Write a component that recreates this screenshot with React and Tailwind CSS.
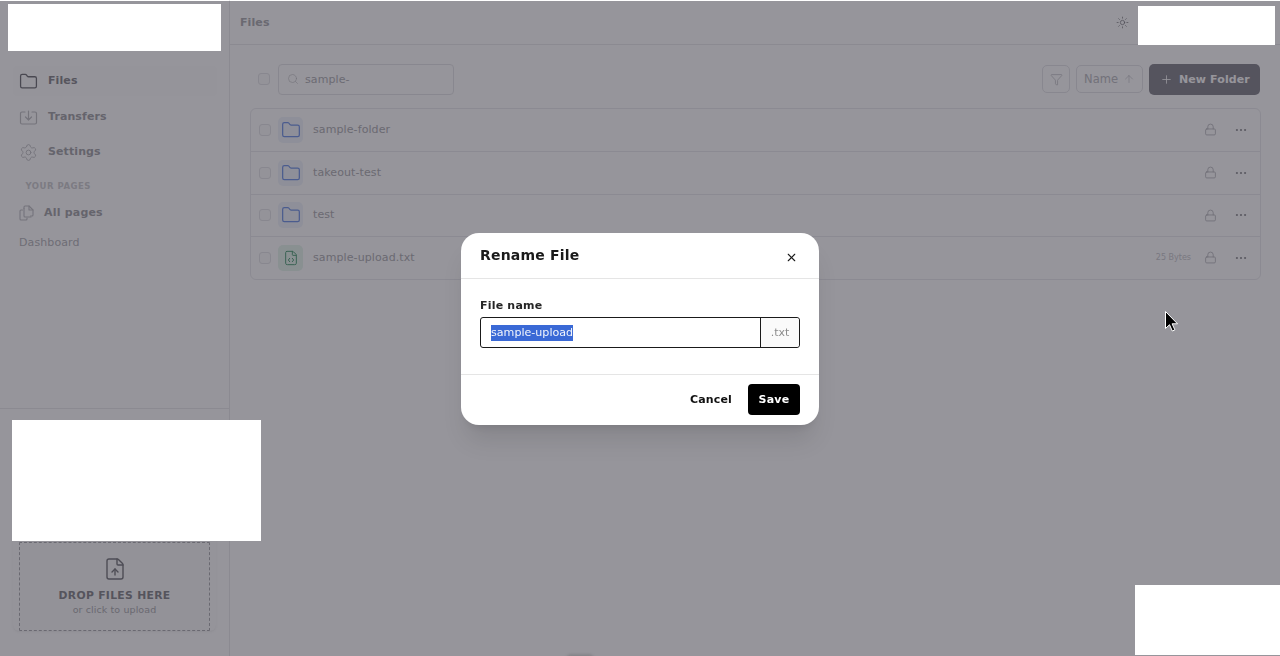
import React from "react";
import { Folder, Settings, Sun, Search, Funnel, ArrowUp, Plus, Lock, Ellipsis, FileCode, X, FileUp } from "lucide-react";

const rows = [
  { name: "sample-folder", type: "folder" },
  { name: "takeout-test", type: "folder" },
  { name: "test", type: "folder" },
  { name: "sample-upload.txt", type: "file", size: "25 Bytes" },
];

function Row({ r, i }) {
  return (
    <div className={`h-[42.5px] flex items-center pl-[8px] pr-[10px] ${i ? "border-t border-[#ececef]" : ""}`}>
      <span className="w-3 h-3 rounded-[3px] border border-[#e6e6e9] bg-[#fbfbfc] mr-[7px]" />
      <span className={`w-[25px] h-[26px] rounded-[5px] flex items-center justify-center ${r.type === "folder" ? "bg-[#f1f5fb]" : "bg-[#e8f6ee]"}`}>
        {r.type === "folder"
          ? <Folder size={20} strokeWidth={1.5} className="text-[#7a9ae8]" />
          : <FileCode size={16} strokeWidth={1.5} className="text-[#5aa47e]" />}
      </span>
      <span className="ml-[10px] text-[11px] text-[#b2b2b6] tracking-[0.1px]">{r.name}</span>
      <span className="flex-1" />
      {r.size && <span className="text-[8px] text-[#ccccd0] mr-[13px]">{r.size}</span>}
      <Lock size={13} strokeWidth={1.4} className="text-[#b4b4b8] mr-[17px]" />
      <Ellipsis size={14} strokeWidth={1.8} className="text-[#98989c] mr-[2px]" />
    </div>
  );
}

export default function App() {
  return (
    <div className="relative h-[656px] w-[1280px] overflow-hidden bg-white font-['DejaVu_Sans','Liberation_Sans',sans-serif]">
      <div className="flex h-full">
        {/* Sidebar */}
        <aside className="w-[230px] shrink-0 border-r border-[#ececee] flex flex-col bg-white">
          <div className="h-[66px]" />
          <nav className="px-[13px] flex flex-col">
            <div className="h-[30px] mr-[-1px] flex items-center gap-[10px] px-[6px] rounded bg-[#fdfdfd] text-[#8e8e92] text-[11px] font-bold tracking-[0.1px]">
              <Folder size={19} strokeWidth={1.6} className="text-[#77777c]" />
              Files
            </div>
            <div className="h-[29px] mt-[7px] flex items-center gap-[10px] px-[6px] text-[#a8a8ac] text-[11px] font-bold tracking-[0.1px]">
              <svg width="19" height="19" viewBox="0 0 19 19" fill="none" stroke="#c4c4c7" strokeWidth="1.2" strokeLinecap="round" strokeLinejoin="round">
                <path d="M6 4H3a1.5 1.5 0 0 0-1.5 1.5v9A1.5 1.5 0 0 0 3 16h13a1.5 1.5 0 0 0 1.5-1.5v-9A1.5 1.5 0 0 0 16 4h-3" />
                <path d="M9.5 3v8.5M6.5 9l3 3 3-3" />
              </svg>
              Transfers
            </div>
            <div className="h-[29px] mt-[6px] flex items-center gap-[10px] px-[6px] text-[#a8a8ac] text-[11px] font-bold tracking-[0.1px]">
              <Settings size={19} strokeWidth={1.2} className="text-[#c4c4c7]" />
              Settings
            </div>
            <div className="mt-[13px] ml-[12.5px] text-[8.5px] font-bold text-[#d0d0d3] tracking-[0.5px]">YOUR PAGES</div>
            <div className="h-[26px] mt-[7px] flex items-center gap-[10px] px-[6px] text-[#a8a8ac] text-[11px] font-bold tracking-[0.2px]">
              <svg width="15" height="16" viewBox="0 0 15 16" fill="none" stroke="#c4c4c7" strokeWidth="1.1" strokeLinecap="round" strokeLinejoin="round">
                <path d="M5 3.5V2a1 1 0 0 1 1-1h4l4 4v5a1 1 0 0 1-1 1h-1.5" />
                <path d="M10 1v4h4" />
                <path d="M3.5 5H2a1 1 0 0 0-1 1v8a1 1 0 0 0 1 1h5a1 1 0 0 0 1-1v-1" />
                <path d="M5 3.5v7.5a1 1 0 0 0 1 1h6" />
              </svg>
              All pages
            </div>
            <div className="mt-[9px] ml-[6px] text-[11px] tracking-[0.1px] text-[#b8b8bc]">Dashboard</div>
          </nav>
          <div className="flex-1" />
          <div className="h-[248px] border-t border-[#ececee] px-[13px] flex flex-col justify-end pb-[18px]">
            <div className="h-[95px] rounded-md bg-[#fdfdfd] p-[6px] mb-[7px] shadow-sm shadow-black/5 ">
              <div className="h-[89px] border border-dashed border-[#b0b0b4] bg-[#fafafa] flex flex-col items-center pt-[14px] rounded-[1px]">
                <FileUp size={24} strokeWidth={1.4} className="text-[#7e7e82]" />
                <div className="mt-[8px] text-[10.8px] font-bold text-[#8c8c90] tracking-[0.3px] leading-[14px]">DROP FILES HERE</div>
                <div className="text-[9.5px] text-[#b0b0b4] leading-[13px] tracking-[0.1px]">or click to upload</div>
              </div>
            </div>
          </div>
        </aside>

        {/* Main */}
        <main className="flex-1 flex flex-col">
          <header className="h-[45px] shrink-0 border-b border-[#ececee] flex items-center pl-[10px] pr-[151px]">
            <span className="text-[11px] font-bold text-[#b0b0b4] tracking-[0.1px] pt-[2px]">Files</span>
            <span className="flex-1" />
            <Sun size={13} strokeWidth={1.3} className="text-[#7e7e82]" />
          </header>
          <div className="pl-[20px] pr-[19px]">
            <div className="h-[30px] mt-[19px] mr-[1px] flex items-center">
              <span className="w-3 h-3 rounded-[3px] border border-[#e6e6e9] bg-[#fbfbfc] ml-[8px] mr-[8px]" />
              <div className="w-[176px] h-[31px] border border-[#e6e6e9] rounded flex items-center pl-[8px] gap-[6px]">
                <Search size={12} strokeWidth={1.3} className="text-[#c4c4c8]" />
                <span className="text-[11px] text-[#b4b4b8] tracking-[0.1px] pt-[2px]">sample-</span>
              </div>
              <span className="flex-1" />
              <div className="w-[28px] h-[28px] border border-[#e6e6e9] rounded-[5px] flex items-center justify-center mr-[6px]">
                <Funnel size={13} strokeWidth={1.2} className="text-[#b8b8bc]" />
              </div>
              <div className="w-[67px] h-[28px] border border-[#e6e6e9] rounded-[5px] flex items-center justify-center gap-[5px] text-[11.5px] text-[#c0c0c4] mr-[6px]">
                <span className="pt-[1px]">Name</span> <ArrowUp size={12} strokeWidth={1.2} />
              </div>
              <div className="w-[111px] h-[31px] bg-[#8c8b93] rounded-[5px] flex items-center pl-[11px] gap-[6px] text-[11px] font-bold text-white tracking-[0.1px]">
                <Plus size={13} strokeWidth={1.5} /> <span className="pt-[2px]">New Folder</span>
              </div>
            </div>
            <div className="mt-[13.6px] border border-[#ececef] rounded-md">
              {rows.map((r, i) => <Row key={r.name} r={r} i={i} />)}
            </div>
          </div>
        </main>
      </div>

      {/* Redaction blocks */}
      <div className="absolute left-[8px] top-[4px] w-[213px] h-[47px] bg-white z-20" />
      <div className="absolute left-[1138px] top-[6px] w-[137px] h-[39px] bg-white z-20" />
      <div className="absolute left-[12px] top-[420px] w-[249px] h-[121px] bg-white z-20" />
      <div className="absolute left-[1135px] top-[585px] w-[145px] h-[70px] bg-white z-20" />

      {/* Overlay */}
      <div className="absolute inset-x-0 top-[1px] bottom-0 z-10 bg-[#100e1c]/44 backdrop-blur-[0.6px]" />

      {/* Shadow arc at the bottom edge */}
      <div className="absolute left-[566px] top-[654px] w-[28px] h-[10px] rounded-full bg-[#85858a] blur-[1px] z-20" />

      {/* Dialog */}
      <div className="absolute inset-0 z-30 flex items-center justify-center pt-[2px]">
        <div className="w-[358px] h-[192px] bg-white rounded-[18px] shadow-xl flex flex-col">
          <div className="h-[46px] shrink-0 border-b border-[#e5e5e5] flex items-center justify-between pl-[19px] pr-[21px]">
            <span className="text-[14px] font-bold text-[#1a1a1a] -mt-[1px] tracking-[0.2px]">Rename File</span>
            <X size={13} strokeWidth={2} className="text-[#1a1a1a] mt-[3px]" />
          </div>
          <div className="h-[96px] shrink-0 border-b border-[#e5e5e5] px-[19px] pt-[20px]">
            <div className="text-[11px] font-bold text-[#262626] leading-[13px] tracking-[0.2px]">File name</div>
            <div className="mt-[5px] h-[31px] flex border border-[#1a1a1a] rounded-[3px]">
              <div className="flex-1 flex items-center pl-[10px] border-r border-[#1a1a1a]">
                <span className="bg-[#3a69d6] text-[#f2f5fc] text-[11.1px] leading-[16px]">sample-upload</span>
              </div>
              <div className="w-[38px] bg-[#fafafa] rounded-r-[3px] flex items-center justify-center text-[11px] text-[#8c8c8c] pt-[1px]">.txt</div>
            </div>
          </div>
          <div className="flex-1 flex items-center justify-end pr-[19px] pb-[1px] gap-[16px]">
            <span className="text-[11px] font-bold text-[#111] tracking-[0.15px] pt-[2px]">Cancel</span>
            <span className="w-[52px] h-[31px] bg-black rounded-[4px] flex items-center justify-center text-[11px] font-bold text-white tracking-[0.2px] pt-[2px]">Save</span>
          </div>
        </div>
      </div>

      {/* Cursor */}
      <svg className="absolute left-[1164px] top-[310px] z-40" width="15" height="23" viewBox="0 0 15 23">
        <path d="M1.5 1.5v17l4-3.8 2.8 6.3 2.6-1.1-2.8-6.1h5.4z" fill="#000" stroke="#fff" strokeWidth="1" />
      </svg>
    </div>
  );
}
